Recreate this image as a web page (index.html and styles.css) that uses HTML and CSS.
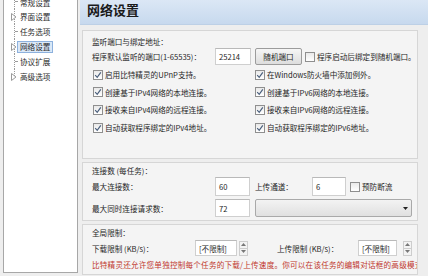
FILE: index.html
```html
<!DOCTYPE html>
<html lang="zh-CN">
<head>
<meta charset="utf-8">
<title>网络设置</title>
<link rel="stylesheet" href="styles.css">
</head>
<body>
<div class="win">
  <aside class="tree">
    <ul class="tree-list">
      <li class="node"><span class="ind"><span class="twig"></span></span><span class="lbl">常规设置</span></li>
      <li class="node"><span class="ind"><svg class="exp" width="6" height="8" viewBox="0 0 6 8"><path d="M0.5 0.5 L5 4 L0.5 7.5 Z" fill="#fff" stroke="#9a9a9a" stroke-width="1"/></svg></span><span class="lbl">界面设置</span></li>
      <li class="node"><span class="ind"><span class="twig"></span></span><span class="lbl">任务选项</span></li>
      <li class="node"><span class="ind"><svg class="exp" width="6" height="8" viewBox="0 0 6 8"><path d="M0.5 0.5 L5 4 L0.5 7.5 Z" fill="#fff" stroke="#9a9a9a" stroke-width="1"/></svg></span><span class="lbl sel">网络设置</span></li>
      <li class="node"><span class="ind"><span class="twig"></span></span><span class="lbl">协议扩展</span></li>
      <li class="node last"><span class="ind"><svg class="exp" width="6" height="8" viewBox="0 0 6 8"><path d="M0.5 0.5 L5 4 L0.5 7.5 Z" fill="#fff" stroke="#9a9a9a" stroke-width="1"/></svg></span><span class="lbl">高级选项</span></li>
    </ul>
  </aside>

  <main class="pane">
    <h1 class="title">网络设置</h1>

    <section class="group g1">
      <div class="line">监听端口与绑定地址：</div>
      <div class="row port-row">
        <span class="lab w-port">程序默认监听的端口(1-65535)：</span>
        <span class="field f-port">25214</span>
        <span class="btn">随机端口</span>
        <span class="chk"><span class="box"></span><span>程序启动后绑定到随机端口。</span></span>
      </div>
      <div class="chk-grid">
        <span class="chk"><span class="box"><svg width="8" height="8" viewBox="0 0 8 8"><path d="M1.2 4.2 L3.2 6.3 L6.8 1.4" fill="none" stroke="#4a5f7c" stroke-width="1.2"/></svg></span><span>启用比特精灵的UPnP支持。</span></span>
        <span class="chk"><span class="box"><svg width="8" height="8" viewBox="0 0 8 8"><path d="M1.2 4.2 L3.2 6.3 L6.8 1.4" fill="none" stroke="#4a5f7c" stroke-width="1.2"/></svg></span><span>在Windows防火墙中添加例外。</span></span>
        <span class="chk"><span class="box"><svg width="8" height="8" viewBox="0 0 8 8"><path d="M1.2 4.2 L3.2 6.3 L6.8 1.4" fill="none" stroke="#4a5f7c" stroke-width="1.2"/></svg></span><span>创建基于IPv4网络的本地连接。</span></span>
        <span class="chk"><span class="box"><svg width="8" height="8" viewBox="0 0 8 8"><path d="M1.2 4.2 L3.2 6.3 L6.8 1.4" fill="none" stroke="#4a5f7c" stroke-width="1.2"/></svg></span><span>创建基于IPv6网络的本地连接。</span></span>
        <span class="chk"><span class="box"><svg width="8" height="8" viewBox="0 0 8 8"><path d="M1.2 4.2 L3.2 6.3 L6.8 1.4" fill="none" stroke="#4a5f7c" stroke-width="1.2"/></svg></span><span>接收来自IPv4网络的远程连接。</span></span>
        <span class="chk"><span class="box"><svg width="8" height="8" viewBox="0 0 8 8"><path d="M1.2 4.2 L3.2 6.3 L6.8 1.4" fill="none" stroke="#4a5f7c" stroke-width="1.2"/></svg></span><span>接收来自IPv6网络的远程连接。</span></span>
        <span class="chk"><span class="box"><svg width="8" height="8" viewBox="0 0 8 8"><path d="M1.2 4.2 L3.2 6.3 L6.8 1.4" fill="none" stroke="#4a5f7c" stroke-width="1.2"/></svg></span><span>自动获取程序绑定的IPv4地址。</span></span>
        <span class="chk"><span class="box"><svg width="8" height="8" viewBox="0 0 8 8"><path d="M1.2 4.2 L3.2 6.3 L6.8 1.4" fill="none" stroke="#4a5f7c" stroke-width="1.2"/></svg></span><span>自动获取程序绑定的IPv6地址。</span></span>
      </div>
    </section>

    <section class="group g2">
      <div class="line">连接数 (每任务)：</div>
      <div class="row conn-row">
        <span class="lab w-conn">最大连接数：</span>
        <span class="field f-num">60</span>
        <span class="lab w-up">上传通道：</span>
        <span class="field f-up">6</span>
        <span class="chk"><span class="box"></span><span>预防断流</span></span>
      </div>
      <div class="row conn-row2">
        <span class="lab w-conn">最大同时连接请求数：</span>
        <span class="field f-num">72</span>
        <span class="combo"><svg width="5" height="3" viewBox="0 0 5 3"><path d="M0 0 H5 L2.5 3 Z" fill="#222"/></svg></span>
      </div>
    </section>

    <section class="group g3">
      <div class="line">全局限制：</div>
      <div class="row lim-row">
        <span class="lab w-dl">下载限制 (KB/s)：</span>
        <span class="field f-lim">[不限制]</span>
        <span class="spin"><span class="sp"><svg width="5" height="3" viewBox="0 0 5 3"><path d="M0 3 H5 L2.5 0 Z" fill="#777"/></svg></span><span class="sp"><svg width="5" height="3" viewBox="0 0 5 3"><path d="M0 0 H5 L2.5 3 Z" fill="#777"/></svg></span></span>
        <span class="lab w-ul">上传限制 (KB/s)：</span>
        <span class="field f-lim2">[不限制]</span>
        <span class="spin spin2"><span class="sp"><svg width="5" height="3" viewBox="0 0 5 3"><path d="M0 3 H5 L2.5 0 Z" fill="#777"/></svg></span><span class="sp"><svg width="5" height="3" viewBox="0 0 5 3"><path d="M0 0 H5 L2.5 3 Z" fill="#777"/></svg></span></span>
      </div>
      <div class="line note">比特精灵还允许您单独控制每个任务的下载/上传速度。你可以在该任务的编辑对话框的高级模式中设置。</div>
    </section>
  </main>
</div>
</body>
</html>
```

FILE: styles.css
```css
* { box-sizing: border-box; }

html, body {
  margin: 0;
  padding: 0;
}

body {
  width: 428px;
  height: 276px;
  overflow: hidden;
  background: #eeeeee;
  font-family: "Noto Sans CJK SC", "Noto Sans", sans-serif;
  font-size: 7.6px;
  color: #262626;
}

.win {
  display: flex;
  height: 276px;
}

/* ---------- tree ---------- */
.tree {
  margin-left: 3px;
  width: 75px;
  height: 273px;
  background: #ffffff;
  border: 1px solid #a7a7a7;
  border-top: none;
  overflow: hidden;
  flex: none;
}

.tree-list {
  list-style: none;
  margin: -6px 0 0 0;
  padding: 0;
}

.node {
  display: flex;
  align-items: center;
  height: 15px;
  background: repeating-linear-gradient(to bottom, #9a9a9a 0 1px, transparent 1px 2px) 10px 0 / 1px 100% no-repeat;
}

.node:first-child .lbl { position: relative; top: 1px; }

.node.last {
  background: repeating-linear-gradient(to bottom, #9a9a9a 0 1px, transparent 1px 2px) 10px 0 / 1px 50% no-repeat;
}

.ind {
  width: 13px;
  height: 100%;
  display: flex;
  align-items: center;
  flex: none;
}

.twig {
  margin-left: 11px;
  width: 3px;
  height: 0;
  border-top: 1px dotted #9a9a9a;
}

.exp {
  margin-left: 7px;
  display: block;
}

.lbl {
  padding: 0 2px;
  border: 1px solid transparent;
  line-height: 10px;
  white-space: nowrap;
  color: #2a2a2a;
}

.lbl.sel {
  background: #dbe8f7;
  border-color: #8db1dd;
}

/* ---------- pane ---------- */
.pane {
  margin-left: 2px;
  flex: 1;
  display: flex;
  flex-direction: column;
  min-width: 0;
}

.title {
  margin: 0;
  height: 25px;
  padding: 1px 0 0 7px;
  font-size: 13px;
  line-height: 17px;
  font-weight: bold;
  color: #1b1b1b;
  background: linear-gradient(to bottom, #dbe7f5, #c7d9ee);
  border-bottom: 1px solid #bdd0e6;
}

.group {
  margin: 3px 10px 0 2px;
  border: 1px solid #d6d6d6;
  background: #f4f4f4;
  padding: 2px 1px 3px 9px;
  overflow: hidden;
  display: flex;
  flex-direction: column;
}

.g1 {
  margin-top: 5px;
  padding-top: 5px;
  padding-bottom: 22px;
}

.line {
  height: 12px;
  line-height: 12px;
  white-space: nowrap;
}

.row {
  display: flex;
  align-items: center;
}

.lab {
  white-space: nowrap;
  flex: none;
}

.field {
  display: flex;
  align-items: center;
  background: #ffffff;
  border: 1px solid #cfcfcf;
  border-top-color: #b9b9b9;
  padding-left: 3px;
  flex: none;
  white-space: nowrap;
}

/* listen group */
.port-row { height: 17px; }
.w-port { width: 123px; }
.f-port { width: 36px; height: 17px; }

.btn {
  margin-left: 4px;
  width: 47px;
  height: 17px;
  display: flex;
  align-items: center;
  justify-content: center;
  border: 1px solid #9c9c9c;
  border-radius: 2px;
  background: linear-gradient(to bottom, #f6f6f6, #dddddd);
  flex: none;
}

.port-row .chk { margin-left: 3px; }

.chk {
  display: flex;
  align-items: center;
  gap: 2px;
  white-space: nowrap;
}

.box {
  width: 10px;
  height: 10px;
  border: 1px solid #8f8f8f;
  background: linear-gradient(to bottom, #e9e9e9, #ffffff);
  display: flex;
  align-items: center;
  justify-content: center;
  flex: none;
}

.chk-grid {
  margin-top: 1px;
  display: grid;
  grid-template-columns: 163px auto;
  grid-auto-rows: 17.6px;
  align-items: center;
}

.chk-grid .chk:nth-child(odd) { margin-left: 1px; }

/* connection group */
.conn-row { height: 19px; }
.conn-row2 { height: 18px; margin-top: 3px; }
.w-conn { width: 123px; }
.f-num { width: 35px; height: 100%; }
.w-up { margin-left: 5px; width: 57px; }
.f-up { width: 34px; height: 100%; }
.conn-row .chk { margin-left: 4px; }

.combo {
  margin-left: 5px;
  width: 157px;
  height: 18px;
  border: 1px solid #a9a9a9;
  border-radius: 2px;
  background: linear-gradient(to bottom, #f3f3f3, #e0e0e0);
  display: flex;
  align-items: center;
  justify-content: flex-end;
  padding-right: 3px;
  flex: none;
}

.combo svg { display: block; }

/* limit group */
.lim-row { height: 16px; margin-top: 1px; }
.w-dl { width: 103px; }
.f-lim { width: 42px; height: 16px; }
.w-ul { margin-left: 29px; width: 81px; }
.f-lim2 { width: 39px; height: 16px; }

.spin {
  margin-left: 2px;
  width: 9px;
  height: 15px;
  display: flex;
  flex-direction: column;
  flex: none;
}

.spin2 { margin-left: 6px; }

.sp {
  flex: 1;
  border: 1px solid #cdcdcd;
  background: #f3f3f3;
  display: flex;
  align-items: center;
  justify-content: center;
}

.sp + .sp { border-top: none; }

.sp svg { display: block; }

.note {
  margin-top: 3px;
  color: #c0362c;
  letter-spacing: 0.2px;
}
```
